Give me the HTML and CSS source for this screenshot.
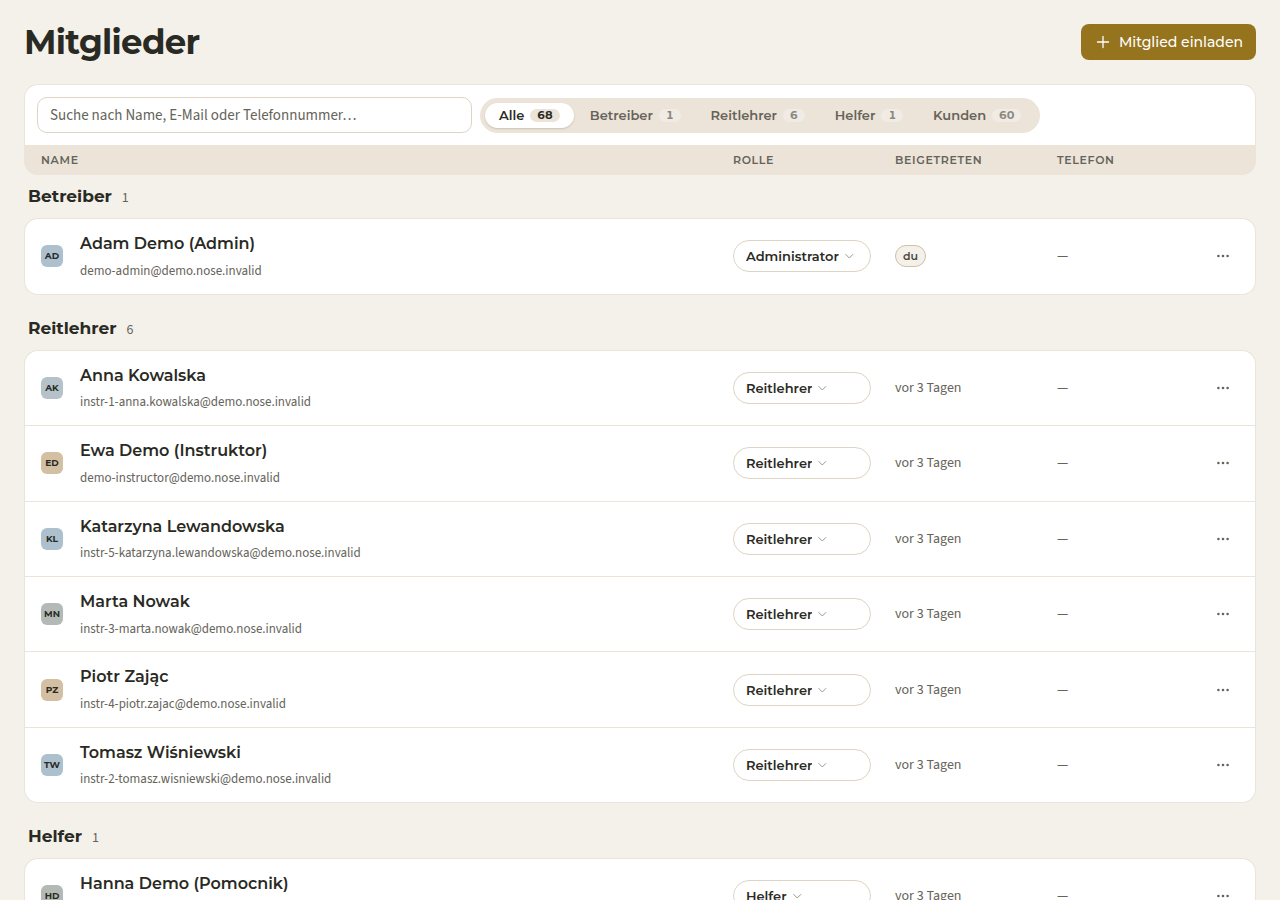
FILE: index.html
```html
<!DOCTYPE html>
<html lang="de">
<head>
<meta charset="utf-8">
<meta name="viewport" content="width=device-width, initial-scale=1">
<title>Mitglieder</title>
<link rel="stylesheet" href="styles.css">
</head>
<body>
<svg class="sprite" aria-hidden="true">
  <symbol id="chevron" viewBox="0 0 10 10"><path d="M1.8 3.5 5.3 7l3.5-3.5" fill="none" stroke="currentColor" stroke-width="1" stroke-linecap="round" stroke-linejoin="round"/></symbol>
  <symbol id="dots" viewBox="0 0 16 16"><circle cx="3.4" cy="8" r="1.3"/><circle cx="8" cy="8" r="1.3"/><circle cx="12.6" cy="8" r="1.3"/></symbol>
</svg>
<main class="page">
  <header class="page-header">
    <h1 class="page-title">Mitglieder</h1>
    <button class="invite" type="button">
      <svg class="invite-icon" viewBox="0 0 16 16" aria-hidden="true"><path d="M8 2.5v11M2.5 8h11" fill="none" stroke="currentColor" stroke-width="1.3" stroke-linecap="round"/></svg>
      Mitglied einladen
    </button>
  </header>

  <div class="toolbar">
    <input class="search" type="search" aria-label="Mitglieder suchen" placeholder="Suche nach Name, E-Mail oder Telefonnummer…">
    <div class="filters" role="group" aria-label="Nach Rolle filtern">
      <button class="filter filter-active" type="button" aria-pressed="true">Alle <span class="count">68</span></button>
      <button class="filter" type="button" aria-pressed="false">Betreiber <span class="count">1</span></button>
      <button class="filter" type="button" aria-pressed="false">Reitlehrer <span class="count">6</span></button>
      <button class="filter" type="button" aria-pressed="false">Helfer <span class="count">1</span></button>
      <button class="filter" type="button" aria-pressed="false">Kunden <span class="count">60</span></button>
    </div>
  </div>

  <table class="members">
    <colgroup>
      <col>
      <col class="col-role">
      <col class="col-joined">
      <col class="col-phone">
      <col class="col-menu">
    </colgroup>
    <thead>
      <tr class="columns">
        <th scope="col">Name</th>
        <th scope="col">Rolle</th>
        <th scope="col">Beigetreten</th>
        <th scope="col">Telefon</th>
        <td></td>
      </tr>
    </thead>
    <tbody>
      <tr class="group"><th colspan="5" scope="rowgroup">Betreiber <span class="group-count">1</span></th></tr>
      <tr class="member">
        <td><div class="person"><span class="avatar avatar-blue">AD</span><div><div class="name">Adam Demo (Admin)</div><div class="email">demo-admin@demo.nose.invalid</div></div></div></td>
        <td><label class="role"><select class="role-select" aria-label="Rolle von Adam Demo"><option selected>Administrator</option><option>Reitlehrer</option><option>Helfer</option></select><svg class="chevron" aria-hidden="true"><use href="#chevron"/></svg></label></td>
        <td><span class="you">du</span></td>
        <td>—</td>
        <td><button class="menu" type="button" aria-label="Aktionen für Adam Demo"><svg class="dots" aria-hidden="true"><use href="#dots"/></svg></button></td>
      </tr>
    </tbody>
    <tbody>
      <tr class="group"><th colspan="5" scope="rowgroup">Reitlehrer <span class="group-count">6</span></th></tr>
      <tr class="member">
        <td><div class="person"><span class="avatar avatar-mist">AK</span><div><div class="name">Anna Kowalska</div><div class="email">instr-1-anna.kowalska@demo.nose.invalid</div></div></div></td>
        <td><label class="role"><select class="role-select" aria-label="Rolle von Anna Kowalska"><option>Administrator</option><option selected>Reitlehrer</option><option>Helfer</option></select><svg class="chevron" aria-hidden="true"><use href="#chevron"/></svg></label></td>
        <td>vor 3 Tagen</td>
        <td>—</td>
        <td><button class="menu" type="button" aria-label="Aktionen für Anna Kowalska"><svg class="dots" aria-hidden="true"><use href="#dots"/></svg></button></td>
      </tr>
      <tr class="member">
        <td><div class="person"><span class="avatar avatar-sand">ED</span><div><div class="name">Ewa Demo (Instruktor)</div><div class="email">demo-instructor@demo.nose.invalid</div></div></div></td>
        <td><label class="role"><select class="role-select" aria-label="Rolle von Ewa Demo"><option>Administrator</option><option selected>Reitlehrer</option><option>Helfer</option></select><svg class="chevron" aria-hidden="true"><use href="#chevron"/></svg></label></td>
        <td>vor 3 Tagen</td>
        <td>—</td>
        <td><button class="menu" type="button" aria-label="Aktionen für Ewa Demo"><svg class="dots" aria-hidden="true"><use href="#dots"/></svg></button></td>
      </tr>
      <tr class="member">
        <td><div class="person"><span class="avatar avatar-blue">KL</span><div><div class="name">Katarzyna Lewandowska</div><div class="email">instr-5-katarzyna.lewandowska@demo.nose.invalid</div></div></div></td>
        <td><label class="role"><select class="role-select" aria-label="Rolle von Katarzyna Lewandowska"><option>Administrator</option><option selected>Reitlehrer</option><option>Helfer</option></select><svg class="chevron" aria-hidden="true"><use href="#chevron"/></svg></label></td>
        <td>vor 3 Tagen</td>
        <td>—</td>
        <td><button class="menu" type="button" aria-label="Aktionen für Katarzyna Lewandowska"><svg class="dots" aria-hidden="true"><use href="#dots"/></svg></button></td>
      </tr>
      <tr class="member">
        <td><div class="person"><span class="avatar avatar-sage">MN</span><div><div class="name">Marta Nowak</div><div class="email">instr-3-marta.nowak@demo.nose.invalid</div></div></div></td>
        <td><label class="role"><select class="role-select" aria-label="Rolle von Marta Nowak"><option>Administrator</option><option selected>Reitlehrer</option><option>Helfer</option></select><svg class="chevron" aria-hidden="true"><use href="#chevron"/></svg></label></td>
        <td>vor 3 Tagen</td>
        <td>—</td>
        <td><button class="menu" type="button" aria-label="Aktionen für Marta Nowak"><svg class="dots" aria-hidden="true"><use href="#dots"/></svg></button></td>
      </tr>
      <tr class="member">
        <td><div class="person"><span class="avatar avatar-sand">PZ</span><div><div class="name">Piotr Zając</div><div class="email">instr-4-piotr.zajac@demo.nose.invalid</div></div></div></td>
        <td><label class="role"><select class="role-select" aria-label="Rolle von Piotr Zając"><option>Administrator</option><option selected>Reitlehrer</option><option>Helfer</option></select><svg class="chevron" aria-hidden="true"><use href="#chevron"/></svg></label></td>
        <td>vor 3 Tagen</td>
        <td>—</td>
        <td><button class="menu" type="button" aria-label="Aktionen für Piotr Zając"><svg class="dots" aria-hidden="true"><use href="#dots"/></svg></button></td>
      </tr>
      <tr class="member">
        <td><div class="person"><span class="avatar avatar-blue">TW</span><div><div class="name">Tomasz Wiśniewski</div><div class="email">instr-2-tomasz.wisniewski@demo.nose.invalid</div></div></div></td>
        <td><label class="role"><select class="role-select" aria-label="Rolle von Tomasz Wiśniewski"><option>Administrator</option><option selected>Reitlehrer</option><option>Helfer</option></select><svg class="chevron" aria-hidden="true"><use href="#chevron"/></svg></label></td>
        <td>vor 3 Tagen</td>
        <td>—</td>
        <td><button class="menu" type="button" aria-label="Aktionen für Tomasz Wiśniewski"><svg class="dots" aria-hidden="true"><use href="#dots"/></svg></button></td>
      </tr>
    </tbody>
    <tbody>
      <tr class="group"><th colspan="5" scope="rowgroup">Helfer <span class="group-count">1</span></th></tr>
      <tr class="member">
        <td><div class="person"><span class="avatar avatar-sage">HD</span><div><div class="name">Hanna Demo (Pomocnik)</div><div class="email">demo-helper@demo.nose.invalid</div></div></div></td>
        <td><label class="role"><select class="role-select" aria-label="Rolle von Hanna Demo"><option>Administrator</option><option>Reitlehrer</option><option selected>Helfer</option></select><svg class="chevron" aria-hidden="true"><use href="#chevron"/></svg></label></td>
        <td>vor 3 Tagen</td>
        <td>—</td>
        <td><button class="menu" type="button" aria-label="Aktionen für Hanna Demo"><svg class="dots" aria-hidden="true"><use href="#dots"/></svg></button></td>
      </tr>
    </tbody>
  </table>
</main>
</body>
</html>
```
FILE: styles.css
```css
:root {
  --page: #f4f1ea;
  --card: #ffffff;
  --sand: #ece4d8;
  --line: #ece4d8;
  --line-strong: #ddd4c3;
  --ink: #2a2a24;
  --muted: #65635a;
  --accent: #96731d;
  --head: Montserrat, Inter, "Liberation Sans", sans-serif;
  --body: "Source Sans 3", "Noto Sans CJK SC", "Noto Sans", sans-serif;
}

*,
*::before,
*::after {
  box-sizing: border-box;
}

body {
  margin: 0;
  background: var(--page);
  color: var(--ink);
  font-family: var(--body);
  font-size: 14px;
  line-height: 20px;
}

button,
input,
select {
  margin: 0;
  font: inherit;
  color: inherit;
}

button {
  cursor: pointer;
}

.sprite {
  display: none;
}

.page {
  padding: 24px;
}

/* Header */
.page-header {
  display: flex;
  align-items: center;
  justify-content: space-between;
  margin-bottom: 24px;
}

.page-title {
  margin: 0;
  font: 700 34px/36px var(--head);
  letter-spacing: -0.02em;
}

.invite {
  display: flex;
  align-items: center;
  gap: 8px;
  height: 36px;
  padding: 0 13px 0 14px;
  border: 0;
  border-radius: 8px;
  background: var(--accent);
  color: #ffffff;
  font: 500 14px/20px var(--head);
}

.invite-icon {
  width: 16px;
  height: 16px;
}

/* Search and role filters */
.toolbar {
  display: flex;
  align-items: center;
  gap: 8px;
  padding: 12px;
  border: 1px solid var(--line);
  border-bottom: 0;
  border-radius: 14px 14px 0 0;
  background: var(--card);
}

.search {
  flex: 0 1 435px;
  min-width: 0;
  height: 36px;
  padding: 0 12px;
  border: 1px solid var(--line-strong);
  border-radius: 10px;
  background: var(--card);
  font-size: 15px;
  appearance: none;
}

.search::placeholder {
  color: var(--muted);
  opacity: 1;
}

.filters {
  display: flex;
  gap: 2px;
  padding: 5px;
  border-radius: 18px;
  background: var(--sand);
}

.filter {
  display: flex;
  align-items: center;
  gap: 6px;
  height: 25px;
  padding: 0 14px;
  border: 0;
  border-radius: 13px;
  background: transparent;
  color: var(--muted);
  font: 600 13px/16px var(--head);
}

.filter-active {
  background: var(--card);
  color: var(--ink);
  box-shadow: 0 1px 2px rgba(42, 42, 36, 0.18);
}

.count {
  padding: 0 7px;
  border-radius: 7px;
  background: #f0ece5;
  color: #8b887f;
  font: 700 11px/13px var(--head);
  font-variant-numeric: tabular-nums;
}

.filter-active .count {
  background: var(--sand);
  color: var(--ink);
}

/* Member table */
.members {
  width: 100%;
  table-layout: fixed;
  border-collapse: separate;
  border-spacing: 0;
}

.col-role,
.col-joined {
  width: 162px;
}

.col-phone {
  width: 150px;
}

.col-menu {
  width: 61px;
}

.members th,
.members td {
  padding: 0 12px;
  text-align: left;
  vertical-align: middle;
}

.members .columns > * {
  height: 30px;
  background: var(--sand);
  color: var(--muted);
  font: 600 11px/14px var(--head);
  letter-spacing: 0.06em;
  text-transform: uppercase;
}

.members .columns > :first-child {
  padding-left: 17px;
  border-bottom-left-radius: 14px;
}

.members .columns > :last-child {
  border-bottom-right-radius: 14px;
}

.members .group > th {
  padding: 20px 4px 8px;
  font: 700 17px/1.6 var(--head);
}

.members thead + tbody .group > th {
  padding-top: 8px;
}

.group-count {
  margin-left: 5px;
  color: var(--muted);
  font: 400 14px/20px var(--body);
}

.members .member > td {
  border-bottom: 1px solid var(--line);
  background: var(--card);
  color: var(--muted);
}

.members .member > :first-child {
  padding: 12px 12px 12px 16px;
  border-left: 1px solid var(--line);
}

.members .member > :last-child {
  padding-right: 16px;
  border-right: 1px solid var(--line);
}

.members .group + .member > td {
  border-top: 1px solid var(--line);
}

.members .group + .member > :first-child {
  border-top-left-radius: 14px;
}

.members .group + .member > :last-child {
  border-top-right-radius: 14px;
}

.members .member:last-child > :first-child {
  border-bottom-left-radius: 14px;
}

.members .member:last-child > :last-child {
  border-bottom-right-radius: 14px;
}

.person {
  display: flex;
  align-items: center;
  gap: 17px;
}

.avatar {
  flex: none;
  width: 22px;
  border-radius: 6px;
  color: var(--ink);
  font: 700 9px/22px var(--head);
  text-align: center;
}

.avatar-blue {
  background: #adc0ce;
}

.avatar-mist {
  background: #b5c2ca;
}

.avatar-sage {
  background: #b3bab6;
}

.avatar-sand {
  background: #d3bfa2;
}

.name {
  margin-bottom: 4px;
  color: var(--ink);
  font: 600 16px/1.6 var(--head);
}

.email {
  font-size: 13px;
  line-height: 1.6;
}

.role {
  display: flex;
  align-items: center;
  gap: 5px;
  height: 32px;
  padding: 0 12px;
  border: 1px solid var(--line-strong);
  border-radius: 16px;
  color: #9b988f;
}

.role-select {
  field-sizing: content;
  padding: 0;
  border: 0;
  background: transparent;
  color: var(--ink);
  font: 600 13px/20px var(--head);
  appearance: none;
  cursor: pointer;
}

.chevron {
  width: 10px;
  height: 10px;
}

.you {
  display: inline-block;
  padding: 0 7px;
  border: 1px solid #d3bfa2;
  border-radius: 11px;
  background: var(--page);
  color: #4a4940;
  font: 600 11px/20px var(--head);
}

.menu {
  display: grid;
  place-items: center;
  width: 32px;
  height: 32px;
  padding: 0;
  border: 0;
  border-radius: 8px;
  background: transparent;
  color: var(--muted);
}

.dots {
  width: 16px;
  height: 16px;
  fill: currentColor;
}
```
